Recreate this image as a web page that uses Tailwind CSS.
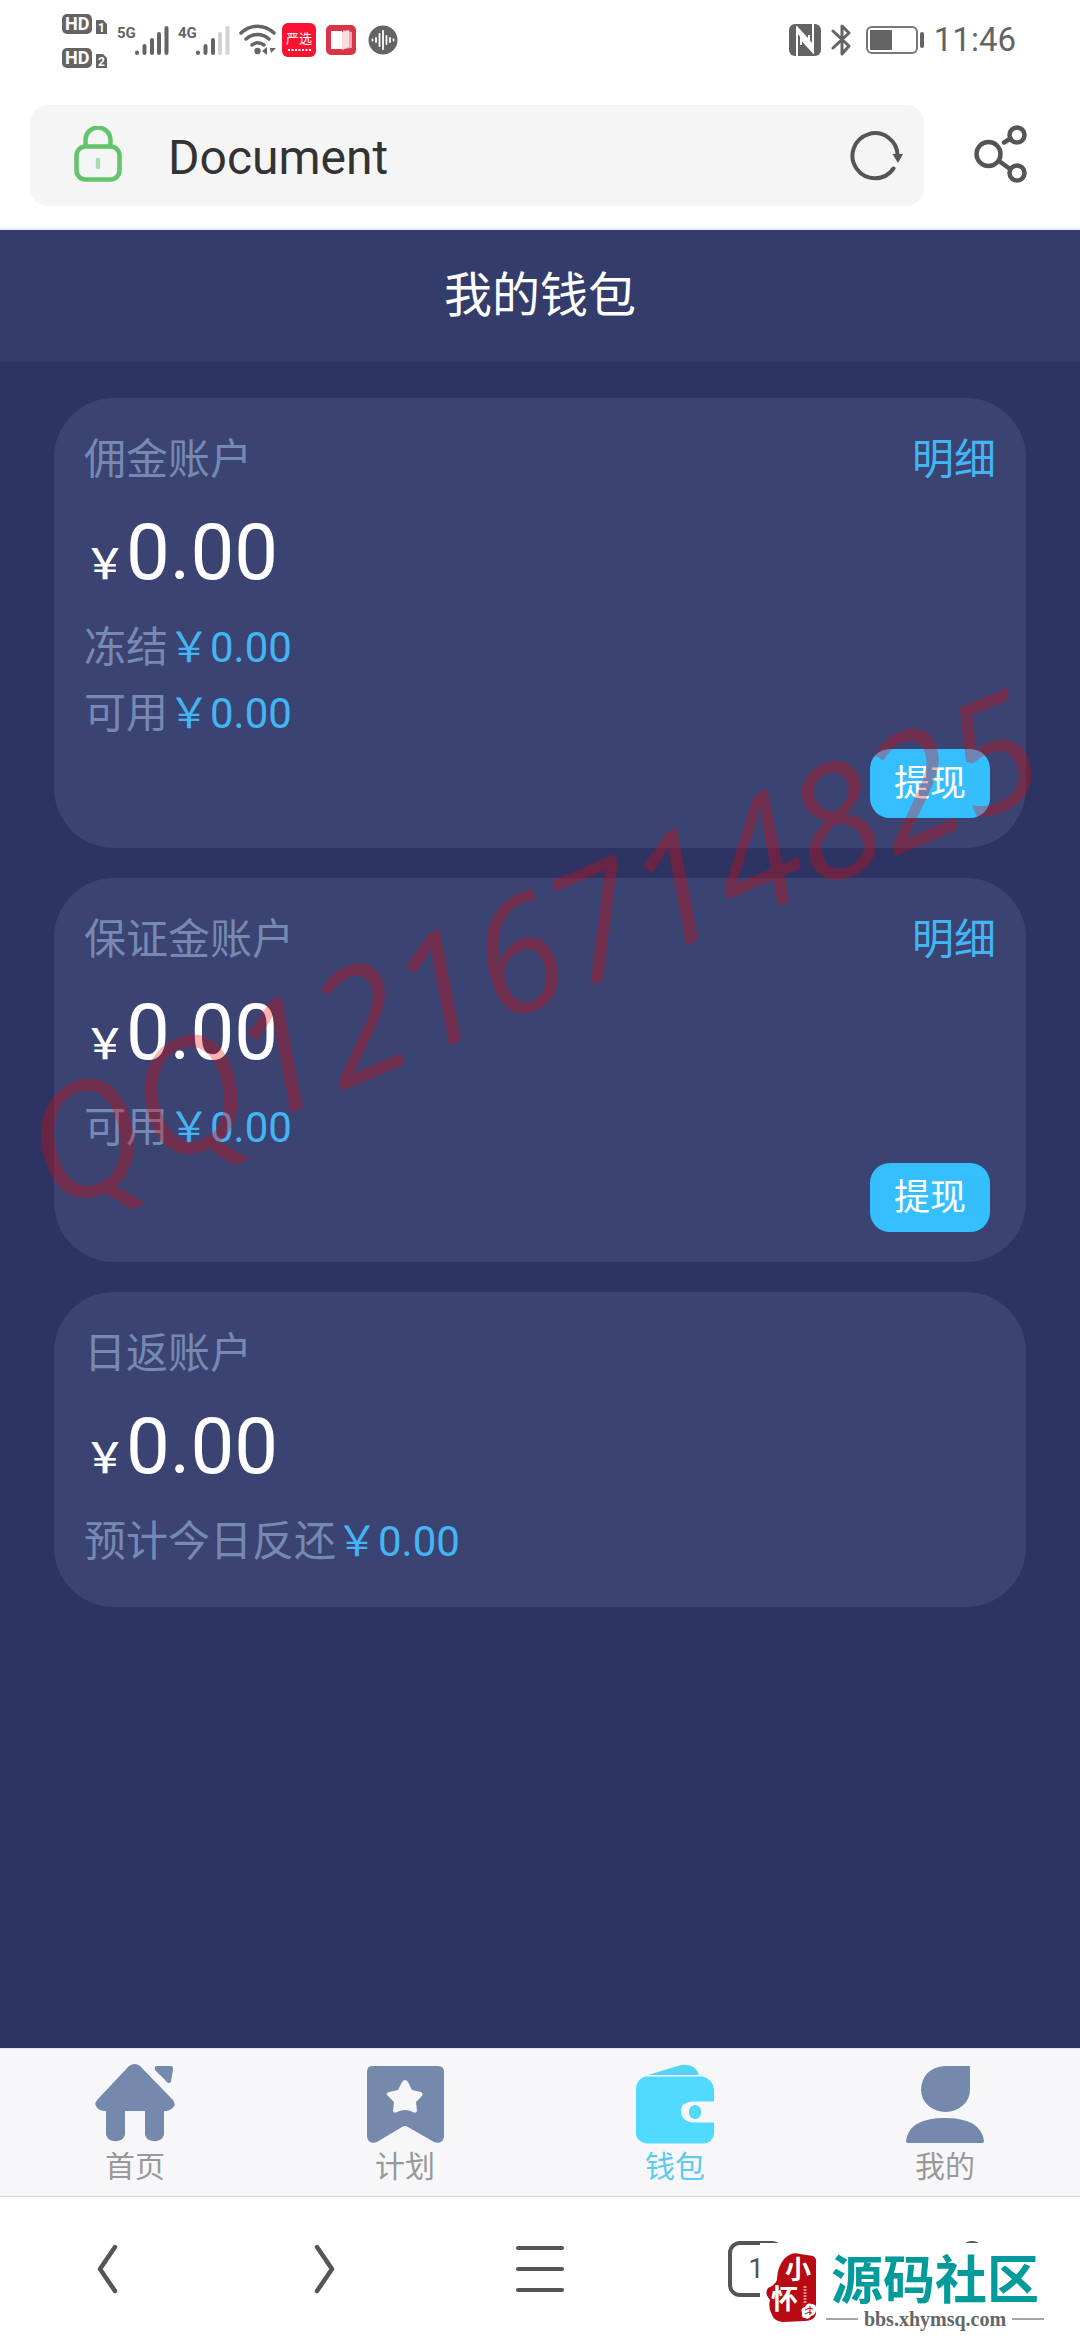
<!DOCTYPE html>
<html lang="zh-CN">
<head>
<meta charset="utf-8">
<meta name="viewport" content="width=device-width, initial-scale=1">
<title>Document</title>
<script src="https://cdn.jsdelivr.net/npm/@tailwindcss/browser@4"></script>
</head>
<body class="flex min-h-screen flex-col bg-white font-[Roboto,'Noto_Sans_CJK_SC',sans-serif]">

<!-- Status bar -->
<div class="flex h-20 items-center justify-between pr-16 pl-[62px] text-[#646464]">
  <div class="flex items-center">
    <svg class="h-[60px] w-[46px]" viewBox="0 0 46 60" fill="currentColor">
      <g font-family="Roboto" font-weight="700">
        <rect x="0" y="4" width="30" height="20" rx="5"/><text x="3" y="20" font-size="18" fill="#fff">HD</text>
        <path d="M34 10h7l4 4v10H34z"/><text x="36" y="22" font-size="12" fill="#fff">1</text>
        <rect x="0" y="38" width="30" height="20" rx="5"/><text x="3" y="54" font-size="18" fill="#fff">HD</text>
        <path d="M34 44h7l4 4v10H34z"/><text x="36" y="56" font-size="12" fill="#fff">2</text>
      </g>
    </svg>
    <svg class="ml-2 h-8 w-[53px]" viewBox="0 0 53 32" fill="none" stroke="currentColor" stroke-width="4" stroke-linecap="round">
      <text x="1" y="14" font-family="Roboto" font-weight="700" font-size="15" fill="currentColor" stroke="none">5G</text>
      <path d="M21 28.500v.5M28.500 22v7M36 16v13M43 10v19M50.500 4v25"/>
    </svg>
    <svg class="ml-2 h-8 w-[53px]" viewBox="0 0 53 32" fill="none" stroke="currentColor" stroke-width="4" stroke-linecap="round">
      <text x="1" y="14" font-family="Roboto" font-weight="700" font-size="15" fill="currentColor" stroke="none">4G</text>
      <path d="M21 28.500v.5M28.500 22v7M36 16v13"/><path stroke="#d2d2d2" d="M43 10v19M50.500 4v25"/>
    </svg>
    <svg class="ml-2 h-8 w-10" viewBox="0 0 40 32" fill="none" stroke="currentColor" stroke-width="3.500" stroke-linecap="round">
      <path d="M3 9c10-9 23-9 33 0M8 15c7-6 16-6 23 0M14 21c4-3 8-3 12 0"/>
      <circle cx="19.500" cy="27" r="3.200" fill="currentColor" stroke="none"/>
      <path d="M29 23v8l-5-4zM31 23v8M32 24h6l-5 5" fill="currentColor" stroke="none"/>
    </svg>
    <svg class="ml-1 h-[34px] w-[34px]" viewBox="0 0 34 34"><rect width="34" height="34" rx="6" fill="#fa1232"/><text x="4" y="20" font-family="Noto Sans CJK SC" font-size="13" fill="#fff">严选</text><path d="M6 27h23" stroke="#fff" stroke-width="2" stroke-dasharray="2 1.500"/></svg>
    <svg class="ml-[10px] h-[30px] w-[30px]" viewBox="0 0 30 30"><rect width="30" height="30" rx="5" fill="#d63648"/><path d="M17 5l9 2v16l-9 1z" fill="#f5a5ac"/><path d="M5 6h11v18H5z" fill="#fff"/><path d="M16 7l7-2v17l-7 3z" fill="#fbdcdf"/></svg>
    <svg class="ml-3 h-[30px] w-[30px]" viewBox="0 0 30 30"><circle cx="15" cy="15" r="14.500" fill="#646464"/><path d="M4.500 14.500v1M8 13v4M11.500 9v12M15 6v18M18.500 11v8M22 13v4M25.500 14.500v1" stroke="#fff" stroke-width="1.800" stroke-linecap="round"/></svg>
  </div>
  <div class="flex items-center">
    <svg class="h-8 w-8" viewBox="0 0 32 32"><rect width="32" height="32" rx="6" fill="#646464"/><path d="M8 32V4l12 13v-6" fill="none" stroke="#fff" stroke-width="2"/><path d="M24 0v28L12 15v6" fill="none" stroke="#fff" stroke-width="2"/><path d="M8 2l16 18v8L8 9z" fill="#fff"/></svg>
    <svg class="ml-[10px] h-8 w-5" viewBox="0 0 20 32" fill="none" stroke="currentColor" stroke-width="3" stroke-linecap="round" stroke-linejoin="round"><path d="M2 7l16 15-7 8V2l7 7L2 24"/></svg>
    <svg class="ml-[15px] h-7 w-[58px]" viewBox="0 0 58 28"><rect x="1" y="1" width="50" height="26" rx="5" fill="none" stroke="#777" stroke-width="2"/><rect x="4" y="4" width="22" height="20" rx="1" fill="#646464"/><rect x="54" y="6" width="4" height="16" rx="2" fill="#646464"/></svg>
    <span class="ml-[10px] text-[33px] leading-10">11:46</span>
  </div>
</div>

<!-- Address bar -->
<div class="flex items-center border-b-2 border-[#e8ecf7] pt-[25px] pr-[52px] pb-[22px] pl-[30px] text-[#555]">
  <div class="flex h-[101px] flex-1 items-center rounded-[18px] bg-[#f5f5f5] pr-5 pl-11">
    <svg class="mb-[3px] h-14 w-12" viewBox="0 0 48 56" fill="none" stroke="#62c46b" stroke-width="4.500"><path d="M11.500 21V14a12.500 12.500 0 0 1 25 0v7"/><rect x="2.500" y="20.500" width="43" height="33" rx="9"/><path d="M24 34v7" stroke="#a5deab" stroke-linecap="round"/></svg>
    <input type="text" aria-label="网址" value="Document" class="ml-[46px] w-0 flex-1 bg-transparent pt-1 text-[48px] leading-[60px] text-[#333] outline-none">
    <button type="button" aria-label="刷新"><svg class="h-[50px] w-[54px]" viewBox="0 0 54 50" fill="none" stroke="currentColor" stroke-width="4" stroke-linecap="round"><path d="M43.500 37.500A22.500 22.500 0 1 1 47.500 25"/><path d="M42.500 23h10.500l-5 9z" fill="currentColor" stroke="none"/></svg></button>
  </div>
  <button type="button" aria-label="分享" class="mb-1 ml-[50px]"><svg class="h-[58px] w-[54px]" viewBox="0 0 54 58" fill="none" stroke="currentColor" stroke-width="4.500" stroke-linecap="round"><circle cx="14.500" cy="29" r="12"/><circle cx="43" cy="10" r="7.500"/><circle cx="43" cy="48" r="7.500"/><path d="M36.500 13.500L30 17.500M25 36l11 8"/></svg></button>
</div>

<!-- Wallet page -->
<div class="relative flex flex-1 flex-col overflow-hidden bg-[#2d3362]">
  <header class="flex h-[132px] items-center justify-center bg-[#343c6c]">
    <h1 class="text-[48px] leading-[60px] text-white">我的钱包</h1>
  </header>
  <main class="flex flex-col gap-[30px] px-[54px] pt-9 text-[42px] text-[#7589b2]">
    <section class="flex flex-col rounded-[60px] bg-[#3b4373] p-[30px]">
      <div class="flex justify-between leading-[64px]"><h2>佣金账户</h2><a href="#" class="text-[#44b5f3]">明细</a></div>
      <p class="h-[123px] leading-[122px] text-white"><span class="font-medium">￥</span><span class="text-[78px]">0.00</span></p>
      <p class="leading-[66px]">冻结<span class="text-[#44b5f3]">￥0.00</span></p>
      <p class="leading-[66px]">可用<span class="text-[#44b5f3]">￥0.00</span></p>
      <button type="button" class="mt-0.5 mr-1.5 h-[69px] w-[120px] self-end rounded-[20px] bg-[#36bfff] text-[36px] leading-[66px] text-white">提现</button>
    </section>
    <section class="flex flex-col rounded-[60px] bg-[#3b4373] p-[30px]">
      <div class="flex justify-between leading-[64px]"><h2>保证金账户</h2><a href="#" class="text-[#44b5f3]">明细</a></div>
      <p class="h-[123px] leading-[122px] text-white"><span class="font-medium">￥</span><span class="text-[78px]">0.00</span></p>
      <p class="leading-[66px]">可用<span class="text-[#44b5f3]">￥0.00</span></p>
      <button type="button" class="mt-0.5 mr-1.5 h-[69px] w-[120px] self-end rounded-[20px] bg-[#36bfff] text-[36px] leading-[66px] text-white">提现</button>
    </section>
    <section class="flex flex-col rounded-[60px] bg-[#3b4373] p-[30px] pb-8">
      <h2 class="leading-[64px]">日返账户</h2>
      <p class="h-[123px] leading-[122px] text-white"><span class="font-medium">￥</span><span class="text-[78px]">0.00</span></p>
      <p class="leading-[66px]">预计今日反还<span class="text-[#44b5f3]">￥0.00</span></p>
    </section>
  </main>
  <div class="pointer-events-none absolute top-[616px] -left-3 origin-center -rotate-[23deg] font-['Open_Sans',sans-serif] text-[156px] leading-[200px] whitespace-nowrap text-[#f00000]/30 italic">QQ1216714825</div>
</div>

<!-- Tab bar -->
<nav class="grid h-[149px] grid-cols-4 border-t border-b border-t-[#e2e2ee] border-b-[#dcdcdc] bg-[#f7f7fa] pt-[15px] text-[30px] leading-[46px] text-[#999]">
  <a href="#" class="flex flex-col items-center">
    <svg class="h-20 w-20" viewBox="0 0 80 80" fill="#7589ad"><path d="M34 2q6-4 11 0l33 34q4 6-2 9-2 2-7 2v24a10 9 0 0 1-19 0V47H30v24a10 9 0 0 1-19 0V47Q3 47 1 42q-2-3 2-7z"/><path d="M61 2h15q2 0 2 3l-2 13q-2 2-4 0L60 6q-1-3 1-4z"/></svg>
    首页
  </a>
  <a href="#" class="flex flex-col items-center">
    <svg class="h-20 w-20" viewBox="0 0 80 80"><path d="M7 2h66q6 0 6 6v65q-2 8-10 5L43 63q-3-2-6 0L12 78q-8 3-10-5V8q0-6 5-6z" fill="#7589ad"/><path d="M37 18q3-4 6 0l4 8 9 2q3 2 0 5l-5 5 1 9q-1 3-4 1-8-4-16 0-3 2-4-1l1-9-6-6q-3-3 1-4l9-2z" fill="#f7f7fa"/></svg>
    计划
  </a>
  <a href="#" aria-current="page" class="flex flex-col items-center text-[#5ccbf0]">
    <svg class="h-20 w-20" viewBox="0 0 80 80"><path d="M13 11L46 1q14-2 18 10z" fill="#55d3f7"/><path d="M10 12.500h58q10 3 11 13v12H57q-11 1-11 10t11 11h22v12q-2 8-9 9H11q-9-2-10-9V25q0-9 9-12.500z" fill="#50daff"/><rect x="54" y="41" width="12" height="14" rx="6" fill="#50daff"/></svg>
    钱包
  </a>
  <a href="#" class="flex flex-col items-center">
    <svg class="h-20 w-20" viewBox="0 0 80 80" fill="#7589ad"><path d="M40 2h25v24a24.500 22 0 1 1-49 0Q17 4 40 2zM1 77Q4 54 40 54t39 23q0 2-2 2H3q-2 0-2-2z"/></svg>
    我的
  </a>
</nav>

<!-- Browser toolbar -->
<div class="relative grid h-[143px] grid-cols-5 justify-items-center text-[#555]">
  <button type="button" aria-label="后退"><svg class="h-[50px] w-6" viewBox="0 0 24 50" fill="none" stroke="currentColor" stroke-width="4.500" stroke-linecap="round" stroke-linejoin="round"><path d="M19 3L4 25l15 22"/></svg></button>
  <button type="button" aria-label="前进"><svg class="h-[50px] w-6" viewBox="0 0 24 50" fill="none" stroke="currentColor" stroke-width="4.500" stroke-linecap="round" stroke-linejoin="round"><path d="M5 3l15 22L5 47"/></svg></button>
  <button type="button" aria-label="菜单"><svg class="h-[50px] w-[50px]" viewBox="0 0 50 50" stroke="currentColor" stroke-width="4" stroke-linecap="round"><path d="M3 4h44M3 25h44M3 46h44"/></svg></button>
  <button type="button" aria-label="标签页"><span class="flex h-14 w-14 items-center justify-center rounded-xl border-4 border-[#555] text-[28px]">1</span></button>
  <button type="button" aria-label="个人中心"><svg class="h-14 w-14" viewBox="0 0 56 56" fill="none" stroke="currentColor" stroke-width="4"><circle cx="28" cy="13" r="11"/><path d="M8 52a20 20 0 0 1 40 0"/></svg></button>
  <!-- Site badge -->
  <div class="absolute right-9 bottom-2 flex h-[89px] items-center gap-2 bg-white pl-1.5">
    <svg class="h-[72px] w-[52px]" viewBox="0 0 52 72">
      <path d="M18 7q8-8 16-5l13 2q4 2 3 8v50q-2 7-11 7l-22 1q-9-1-11-7-4-7-2-15-6-6-2-12 7-3 9-8 0-12 7-21z" fill="#b70a12"/>
      <g font-family="Noto Sans CJK SC" font-weight="700" fill="#fff"><text x="19" y="27" font-size="26">小</text><text x="5" y="57" font-size="27">怀</text></g>
      <path d="M36 61q-2-5 3-6 2-5 7-3 5 0 4 6 0 5-5 6-2 4-6 2-4 0-3-5z" fill="#fff"/><path d="M39 58q4-3 8-1M39 62q4-3 7-1M44 54v9" fill="none" stroke="#b70a12"/>
      <path d="M39 34v18" stroke="#e88" stroke-width="3" stroke-dasharray="2 1"/>
    </svg>
    <div class="flex w-[218px] flex-col items-center pt-3">
      <span class="text-[52px] leading-[50px] font-bold text-[#029a9a]">源码社区</span>
      <span class="flex w-full items-center gap-1.5 font-['Liberation_Serif',serif] text-[20px] leading-6 font-bold text-[#666] before:h-0.5 before:flex-1 before:bg-[#a5a5b0] after:h-0.5 after:flex-1 after:bg-[#a5a5b0]">bbs.xhymsq.com</span>
    </div>
  </div>
</div>
</body>
</html>
